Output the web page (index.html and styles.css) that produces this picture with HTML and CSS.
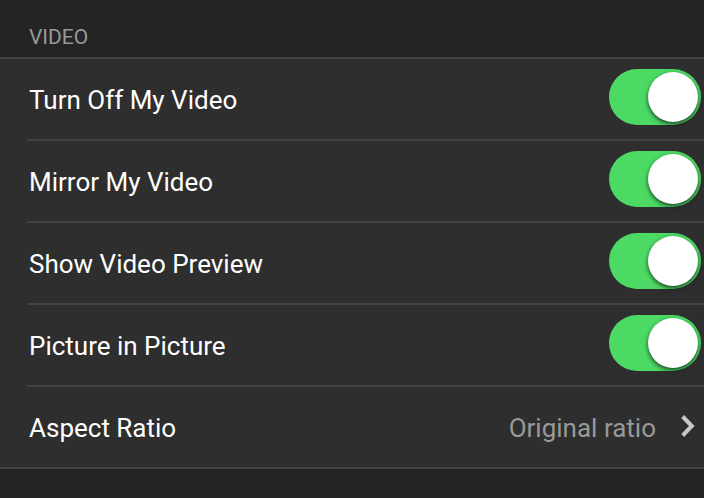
FILE: index.html
```html
<!DOCTYPE html>
<html lang="en">
<head>
<meta charset="utf-8">
<meta name="viewport" content="width=device-width, initial-scale=1">
<title>Video settings</title>
<link rel="stylesheet" href="styles.css">
</head>
<body>
<main>
  <h2 class="section-title">VIDEO</h2>
  <div class="settings">
    <div class="row">
      <label class="label" for="off">Turn Off My Video</label>
      <input class="switch" type="checkbox" id="off" checked>
    </div>
    <div class="row">
      <label class="label" for="mirror">Mirror My Video</label>
      <input class="switch" type="checkbox" id="mirror" checked>
    </div>
    <div class="row">
      <label class="label" for="preview">Show Video Preview</label>
      <input class="switch" type="checkbox" id="preview" checked>
    </div>
    <div class="row">
      <label class="label" for="pip">Picture in Picture</label>
      <input class="switch" type="checkbox" id="pip" checked>
    </div>
    <button class="row" type="button">
      <span class="label">Aspect Ratio</span>
      <span class="value">Original ratio</span>
      <svg class="chevron" viewBox="0 0 16 24" aria-hidden="true"><path d="M2.7 2.5 11.8 12 2.7 21.5"/></svg>
    </button>
  </div>
</main>
</body>
</html>
```
FILE: styles.css
```css
* {
  box-sizing: border-box;
}

body {
  margin: 0;
  background: #242424;
  color: #fff;
  font-family: Roboto, "Liberation Sans", sans-serif;
}

.section-title {
  margin: 0;
  padding: 25px 29px 8px;
  font-size: 21px;
  line-height: 24px;
  font-weight: 400;
  color: #999;
}

.settings {
  padding-left: 27px;
  background: #2e2e2e;
  border-top: 2px solid #424242;
  border-bottom: 2px solid #424242;
}

.row {
  display: flex;
  align-items: center;
  width: 100%;
  height: 82px;
  padding: 0 3px 0 2px;
  border: 0;
  border-bottom: 2px solid #424242;
  background: none;
  color: inherit;
  font: inherit;
  font-size: 26px;
  line-height: 32px;
  text-align: left;
}

.row:last-child {
  height: 80px;
  border-bottom: 0;
}

.label {
  flex: 1;
  padding-top: 2px;
}

.value {
  padding-top: 2px;
  color: #999;
}

.switch {
  appearance: none;
  flex: none;
  width: 92px;
  height: 56px;
  margin: 0 0 4px;
  padding: 3px;
  border-radius: 28px;
  background: #777;
}

.switch::before {
  content: "";
  display: block;
  width: 50px;
  height: 50px;
  border-radius: 50%;
  background: #fff;
  box-shadow: 0 2px 4px rgba(0, 0, 0, 0.7);
}

.switch:checked {
  background: #4cd964;
}

.switch:checked::before {
  margin-left: auto;
}

.chevron {
  width: 16px;
  height: 24px;
  margin: 0 5px 2px 24px;
  fill: none;
  stroke: #c8c8c8;
  stroke-width: 4;
}
```
